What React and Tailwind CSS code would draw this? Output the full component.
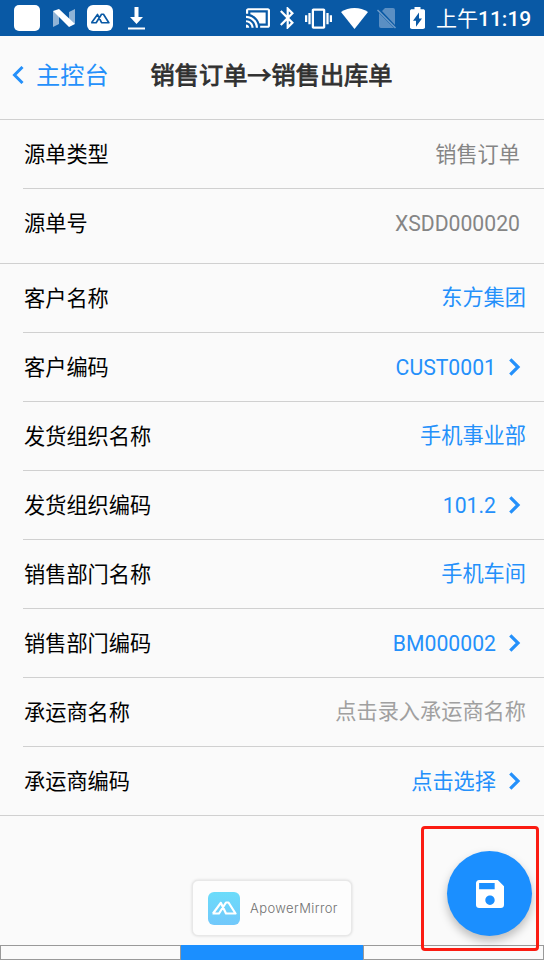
import React from 'react';
import clsx from 'clsx';

const sourceRows = [
    { label: '源单类型', value: '销售订单' },
    { label: '源单号', value: 'XSDD000020' },
];

const detailRows = [
    { label: '客户名称', value: '东方集团' },
    { label: '客户编码', value: 'CUST0001', link: true },
    { label: '发货组织名称', value: '手机事业部' },
    { label: '发货组织编码', value: '101.2', link: true },
    { label: '销售部门名称', value: '手机车间' },
    { label: '销售部门编码', value: 'BM000002', link: true },
    { label: '承运商名称', value: '点击录入承运商名称', placeholder: true },
    { label: '承运商编码', value: '点击选择', link: true },
];

const MirrorMark = ({ className }) => (
    <svg viewBox="0 0 26 14" className={className} fill="none" stroke="currentColor" strokeWidth="2.2" strokeLinejoin="round">
        <path d="M1.5 12.5H8L15 1.5H17.5L24.5 12.5H15L9.8 1.8L2 12.5" />
    </svg>
);

const Chevron = () => (
    <svg viewBox="0 0 12 18" className="mb-0.5 ml-[13px] h-[18px] w-3" fill="none" stroke="currentColor" strokeWidth="3.2">
        <path d="M1.3 1.3L9 9L1.3 16.7" />
    </svg>
);

const StatusBar = () => (
    <div className="flex h-9 items-center bg-[#0959a5] text-white">
        <div className="ml-[14px] size-[26px] rounded-[5px] bg-white" />
        <svg viewBox="0 0 22 18" className="ml-[13px] h-[18px] w-[22px]">
            <path d="M0 2L6 5V15L0 18ZM16 3L22 0V15L16 13Z" fill="#8fb3d6" />
            <path d="M0 2L6 0L22 15L16 18Z" fill="#fff" />
        </svg>
        <div className="ml-3 flex size-[26px] items-center justify-center rounded-[6px] bg-white text-[#0959a5]">
            <MirrorMark className="h-[11px] w-5" />
        </div>
        <svg viewBox="0 0 17 23" className="ml-[15px] h-[23px] w-[17px]" fill="currentColor">
            <path d="M6.5 0H10.5V10H15L8.5 17L2 10H6.5ZM0 20.5H17V22.5H0Z" />
        </svg>

        <svg viewBox="1 3 22 18" className="ml-[101px] h-5 w-6" fill="currentColor">
            <path d="M1 18v3h3c0-1.66-1.34-3-3-3zm0-4v2c2.76 0 5 2.24 5 5h2c0-3.87-3.13-7-7-7zm18-7H5v1.63c3.96 1.28 7.09 4.41 8.37 8.37H19V7zM1 10v2c4.97 0 9 4.03 9 9h2c0-6.08-4.93-11-11-11zm20-7H3c-1.1 0-2 .9-2 2v3h2V5h18v14h-7v2h7c1.1 0 2-.9 2-2V5c0-1.1-.9-2-2-2z" />
        </svg>
        <svg viewBox="5 2 12.71 20" className="ml-[10px] h-[22px] w-[14px]" fill="currentColor">
            <path d="M17.71 7.71L12 2h-1v7.59L6.41 5 5 6.41 10.59 12 5 17.59 6.41 19 11 14.41V22h1l5.71-5.71-4.3-4.29 4.3-4.29zM13 5.83l1.88 1.88L13 9.59V5.83zm1.88 10.46L13 18.17v-3.76l1.88 1.88z" />
        </svg>
        <svg viewBox="0 3 24 18" className="ml-[11px] h-[21px] w-[27px]" fill="currentColor">
            <path d="M0 15h2V9H0v6zm3 2h2V7H3v10zm19-8v6h2V9h-2zm-3 8h2V7h-2v10zM16.5 3h-9C6.67 3 6 3.67 6 4.5v15c0 .83.67 1.5 1.5 1.5h9c.83 0 1.5-.67 1.5-1.5v-15c0-.83-.67-1.5-1.5-1.5zM16 19H8V5h8v14z" />
        </svg>
        <svg viewBox="0 0 27 21" className="ml-[9px] h-[21px] w-[27px]" fill="currentColor">
            <path d="M13.5 21L0 4Q6 0 13.5 0T27 4Z" />
        </svg>
        {/* sin tarjeta SIM */}
        <svg viewBox="0 0 20 21" className="ml-[9px] h-[21px] w-5">
            <path d="M8 0H16Q18 0 18 2V17L5 3ZM2 5L17 20H4Q2 20 2 18Z" fill="#5b8fc3" />
            <path d="M0.5 2L18.5 20" stroke="#6f9dca" strokeWidth="1.5" />
        </svg>
        <svg viewBox="7 2 10 20" className="ml-[13px] h-[22px] w-[15px]" preserveAspectRatio="none" fill="currentColor">
            <path d="M15.67 4H14V2h-4v2H8.33C7.6 4 7 4.6 7 5.33v15.33C7 21.4 7.6 22 8.33 22h7.33c.74 0 1.34-.6 1.34-1.33V5.33C17 4.6 16.4 4 15.67 4zM11 20v-5.5H9L13 7v5.5h2L11 20z" />
        </svg>
        <span className="ml-[11px] pt-0.5 whitespace-nowrap text-[21px] leading-none">
            上午<span className="font-medium">11:19</span>
        </span>
    </div>
);

const Header = () => (
    <header className="flex h-[83px] items-center pb-1">
        <svg viewBox="0 0 12 18" className="mb-0.5 ml-3 h-[18px] w-3 text-[#2490fa]" fill="none" stroke="currentColor" strokeWidth="3">
            <path d="M10.5 1L2.5 9L10.5 17" />
        </svg>
        <span className="ml-3 pt-0.5 text-[24.2px] text-[#2490fa]">主控台</span>
        <h1 className="ml-[42px] pt-px whitespace-nowrap text-[24.2px] text-[#303030] [-webkit-text-stroke:0.8px_#303030]">销售订单→销售出库单</h1>
    </header>
);

const Row = ({ row, last, muted }) => (
    <div
        className={clsx(
            'flex h-[69px] items-center justify-between pt-px text-[21.2px] leading-[30px]',
            !last && 'border-b border-[#d0d0d0]'
        )}
    >
        <span className="pl-px text-black">{row.label}</span>
        <span
            className={clsx(
                'flex items-center',
                muted && 'pr-6 text-[#858585]',
                !muted && (row.placeholder ? 'text-[#a0a0a0]' : 'text-[#2490fa]'),
                !muted && (row.link ? 'pr-[23px]' : 'pr-[18px] pb-0.5')
            )}
        >
            {row.value}
            {row.link && <Chevron />}
        </span>
    </div>
);

const App = () => {
    return (
        <div className="flex h-[960px] w-[544px] flex-col overflow-hidden bg-[#fafafa] font-[Roboto,'Noto_Sans_CJK_SC',sans-serif]">
            <StatusBar />
            <Header />
            <section className="h-[145px] border-y border-[#d0d0d0] pl-[23px]">
                {sourceRows.map((row, i) => (
                    <Row key={row.label} row={row} muted last={i === sourceRows.length - 1} />
                ))}
            </section>
            <section className="h-[552px] border-b border-[#d0d0d0] pl-[23px]">
                {detailRows.map((row, i) => (
                    <Row key={row.label} row={row} last={i === detailRows.length - 1} />
                ))}
            </section>

            <div className="relative flex flex-1 flex-col">
                <div className="mt-16 ml-[192px] flex h-[56px] w-[160px] items-center rounded-md border border-[#e8e8e8] bg-[#fdfdfd] pl-[15px] shadow-[0_0_3px_rgba(0,0,0,0.15)]">
                    <div className="flex h-[33px] w-8 items-center justify-center rounded-[6px] bg-linear-to-b from-[#6bdcfa] to-[#72c8fb] text-white">
                        <MirrorMark className="h-[14px] w-[26px]" />
                    </div>
                    <span className="ml-[10px] pt-0.5 font-[Inter,sans-serif] text-[13px] font-light tracking-[0.4px] text-[#707070]">ApowerMirror</span>
                </div>
                <div className="mt-auto flex h-[15px]">
                    <div className="w-[181px] border border-[#999]" />
                    <div className="w-[182px] bg-[#1b8fff]" />
                    <div className="flex-1 border border-[#999]" />
                </div>

                {/* botón flotante de guardar */}
                <button className="absolute right-3 bottom-6 flex size-[85px] items-center justify-center rounded-full bg-[#1b8fff] text-white shadow-[0_5px_10px_rgba(0,0,0,0.25)]">
                    <svg viewBox="3 3 18 18" className="size-7" fill="currentColor">
                        <path d="M17 3H5c-1.11 0-2 .9-2 2v14c0 1.1.89 2 2 2h14c1.1 0 2-.9 2-2V7l-4-4zm-5 16c-1.66 0-3-1.34-3-3s1.34-3 3-3 3 1.34 3 3-1.34 3-3 3zm3-10H5V5h10v4z" />
                    </svg>
                </button>
                <div className="absolute right-[5px] bottom-[9px] h-[125px] w-[118px] rounded-[4px] border-3 border-[#fb1c12]" />
            </div>
        </div>
    );
};

export default App;
